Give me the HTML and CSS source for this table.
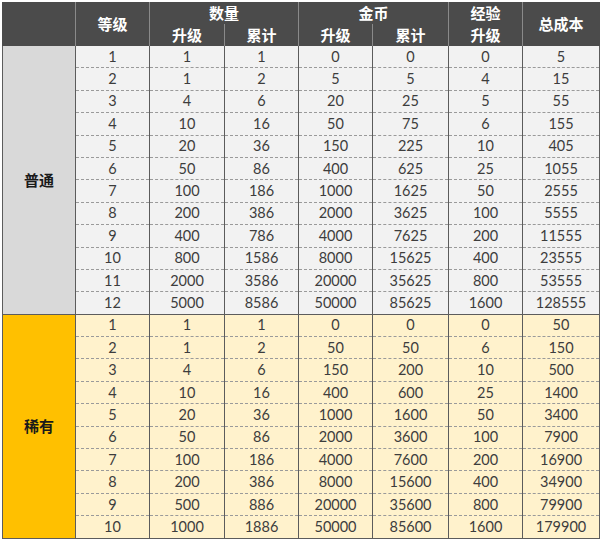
FILE: index.html
```html
<!DOCTYPE html>
<html>
<head>
<meta charset="utf-8">
<link rel="stylesheet" href="styles.css">
</head>
<body>
<table class="tbl">
<colgroup>
<col class="c0"><col class="c1"><col class="c2"><col class="c3"><col class="c4"><col class="c5"><col class="c6"><col class="c7">
</colgroup>
<thead>
<tr class="h1">
<th rowspan="2"></th>
<th rowspan="2">等级</th>
<th colspan="2" class="top">数量</th>
<th colspan="2" class="top">金币</th>
<th class="top">经验</th>
<th rowspan="2">总成本</th>
</tr>
<tr class="h2">
<th class="bot">升级</th><th class="bot">累计</th><th class="bot">升级</th><th class="bot">累计</th><th class="bot">升级</th>
</tr>
</thead>
<tbody class="normal">
<tr><td class="grp" rowspan="12">普通</td><td>1</td><td>1</td><td>1</td><td>0</td><td>0</td><td>0</td><td>5</td></tr>
<tr><td>2</td><td>1</td><td>2</td><td>5</td><td>5</td><td>4</td><td>15</td></tr>
<tr><td>3</td><td>4</td><td>6</td><td>20</td><td>25</td><td>5</td><td>55</td></tr>
<tr><td>4</td><td>10</td><td>16</td><td>50</td><td>75</td><td>6</td><td>155</td></tr>
<tr><td>5</td><td>20</td><td>36</td><td>150</td><td>225</td><td>10</td><td>405</td></tr>
<tr><td>6</td><td>50</td><td>86</td><td>400</td><td>625</td><td>25</td><td>1055</td></tr>
<tr><td>7</td><td>100</td><td>186</td><td>1000</td><td>1625</td><td>50</td><td>2555</td></tr>
<tr><td>8</td><td>200</td><td>386</td><td>2000</td><td>3625</td><td>100</td><td>5555</td></tr>
<tr><td>9</td><td>400</td><td>786</td><td>4000</td><td>7625</td><td>200</td><td>11555</td></tr>
<tr><td>10</td><td>800</td><td>1586</td><td>8000</td><td>15625</td><td>400</td><td>23555</td></tr>
<tr><td>11</td><td>2000</td><td>3586</td><td>20000</td><td>35625</td><td>800</td><td>53555</td></tr>
<tr class="last"><td>12</td><td>5000</td><td>8586</td><td>50000</td><td>85625</td><td>1600</td><td>128555</td></tr>
</tbody>
<tbody class="rare">
<tr><td class="grp" rowspan="10">稀有</td><td>1</td><td>1</td><td>1</td><td>0</td><td>0</td><td>0</td><td>50</td></tr>
<tr><td>2</td><td>1</td><td>2</td><td>50</td><td>50</td><td>6</td><td>150</td></tr>
<tr><td>3</td><td>4</td><td>6</td><td>150</td><td>200</td><td>10</td><td>500</td></tr>
<tr><td>4</td><td>10</td><td>16</td><td>400</td><td>600</td><td>25</td><td>1400</td></tr>
<tr><td>5</td><td>20</td><td>36</td><td>1000</td><td>1600</td><td>50</td><td>3400</td></tr>
<tr><td>6</td><td>50</td><td>86</td><td>2000</td><td>3600</td><td>100</td><td>7900</td></tr>
<tr><td>7</td><td>100</td><td>186</td><td>4000</td><td>7600</td><td>200</td><td>16900</td></tr>
<tr><td>8</td><td>200</td><td>386</td><td>8000</td><td>15600</td><td>400</td><td>34900</td></tr>
<tr><td>9</td><td>500</td><td>886</td><td>20000</td><td>35600</td><td>800</td><td>79900</td></tr>
<tr class="last"><td>10</td><td>1000</td><td>1886</td><td>50000</td><td>85600</td><td>1600</td><td>179900</td></tr>
</tbody>
</table>
</body>
</html>
```
FILE: styles.css
```css
html, body {
  margin: 0;
  padding: 0;
  background: #ffffff;
}
body {
  padding: 2px 0 0 2px;
}
.tbl {
  border-collapse: collapse;
  table-layout: fixed;
  width: 597px;
  font-family: Lato, "Open Sans", "Noto Sans CJK SC", sans-serif;
  font-size: 14.5px;
  color: #3d3d3d;
}
.c0 { width: 73px; }
.c1 { width: 74px; }
.c2 { width: 75px; }
.c3 { width: 74px; }
.c4 { width: 74px; }
.c5 { width: 76px; }
.c6 { width: 74px; }
.c7 { width: 77px; }
thead th {
  background: #4b4b4b;
  color: #ffffff;
  font-family: "Noto Sans CJK SC", sans-serif;
  font-weight: 700;
  font-size: 15px;
  padding: 0;
  border-left: 1px solid #8a8a8a;
  border-right: 1px solid #8a8a8a;
  text-align: center;
  vertical-align: middle;
  line-height: 18px;
}
thead th:first-child {
  border-left: 1px solid #4b4b4b;
}
thead th:last-child {
  border-right: 1px solid #4b4b4b;
}
.h1 th, .h2 th { height: 22px; }
tbody td {
  padding: 0;
  height: 21.4px;
  text-align: center;
  line-height: 18px;
  border-left: 1px solid #5c5c5c;
  border-right: 1px solid #5c5c5c;
  border-bottom: 1px dashed #9a9a9a;
}
tbody tr.last td {
  border-bottom: 1px solid #5c5c5c;
}
tbody td.grp {
  font-family: "Noto Sans CJK SC", sans-serif;
  font-weight: 700;
  font-size: 15px;
  color: #1a1a1a;
  border-bottom: 1px solid #5c5c5c;
}
.normal td { background: #f2f2f2; }
.normal td.grp { background: #d9d9d9; }
.rare td { background: #fff2cc; }
.rare td.grp { background: #ffc000; }
```
